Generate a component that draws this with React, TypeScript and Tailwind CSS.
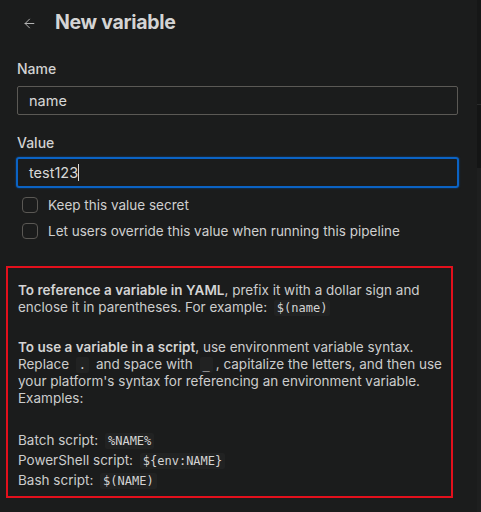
import { ArrowLeft } from "lucide-react";

const font = { fontFamily: "Inter, 'Noto Sans', sans-serif" };

function Code({ children }: { children: string }) {
    return (
        <code className="mx-[3px] px-[3px] py-[1px] rounded-[2px] bg-[#212222] font-['DejaVu_Sans_Mono',monospace] text-[12px] leading-none text-[#d4d4d4]">
            {children}
        </code>
    );
}

function Checkbox({ label }: { label: string }) {
    return (
        <label className="flex items-center gap-[10px] pl-[5px] h-[26px] text-[13.5px] text-[#cfcfcf]">
            <span className="w-[16px] h-[16px] rounded-[4px] border border-[#5a5854] bg-[#1b1c1c]" />
            {label}
        </label>
    );
}

export default function App() {
    return (
        <div className="relative w-[481px] h-[512px] overflow-hidden bg-[#1b1c1c] text-[#cccccc]" style={font}>
            {/* scrollbar strip */}
            <div className="absolute right-0 top-0 w-[4px] h-full flex flex-col">
                <div className="h-[104px] bg-[#161717]" />
                <div className="h-[64px] bg-[#141515] border-t border-[#2a2b2b]" />
                <div className="flex-1 bg-[#1e1f1f]" />
            </div>

            <div className="pr-[23px]">
                <div className="flex items-center h-[46px] pl-[22px]">
                    <ArrowLeft className="w-[15px] h-[15px] text-[#bdbdbd]" strokeWidth={1.5} />
                    <h1 className="ml-[18px] text-[19.5px] font-bold tracking-[-0.3px] text-[#d4d4d4]">New variable</h1>
                </div>

                <div className="pl-[17px]">
                    <div className="mt-[12px] text-[14px] font-medium text-[#d2d2d2]">Name</div>
                    <div className="mt-[7px] h-[29px] border border-[#5b5955] rounded-[2px] flex items-center pl-[11px] text-[14.5px] text-[#d8d8d8]">
                        name
                    </div>

                    <div className="mt-[17px] text-[14px] font-medium text-[#d2d2d2]">Value</div>
                    <div className="mt-[4px] -ml-[1px] -mr-[1px] h-[31px] border-2 border-[#0b63c4] rounded-[3px] shadow-[0_0_2px_#0b4f9a] flex items-center pl-[11px] text-[14.5px] text-[#d8d8d8]">
                        test123<span className="w-[1px] h-[17px] bg-[#d8d8d8]" />
                    </div>

                    <div className="mt-[4px] flex flex-col">
                        <Checkbox label="Keep this value secret" />
                        <Checkbox label="Let users override this value when running this pipeline" />
                    </div>
                </div>

                <div className="mt-[22px] ml-[6px] w-[447px] h-[232px] border-2 border-[#e3101c] pl-[10px] pr-[3px] pt-[14px] text-[13.5px] leading-[17px] text-[#cccccc]">
                    <p>
                        <b className="font-semibold text-[#d4d4d4]">To reference a variable in YAML</b>, prefix it with a dollar sign and enclose it in parentheses. For example: <Code>$(name)</Code>
                    </p>
                    <p className="mt-[23px]">
                        <b className="font-semibold text-[#d4d4d4]">To use a variable in a script</b>, use environment variable syntax. Replace <Code>.</Code> and space with <Code>_</Code>, capitalize the letters, and then use your platform's syntax for referencing an environment variable. Examples:
                    </p>
                    <div className="mt-[25px] flex flex-col gap-[3px]">
                        <div>Batch script: <Code>%NAME%</Code></div>
                        <div>PowerShell script: <Code>{"${env:NAME}"}</Code></div>
                        <div>Bash script: <Code>$(NAME)</Code></div>
                    </div>
                </div>
            </div>
        </div>
    );
}
